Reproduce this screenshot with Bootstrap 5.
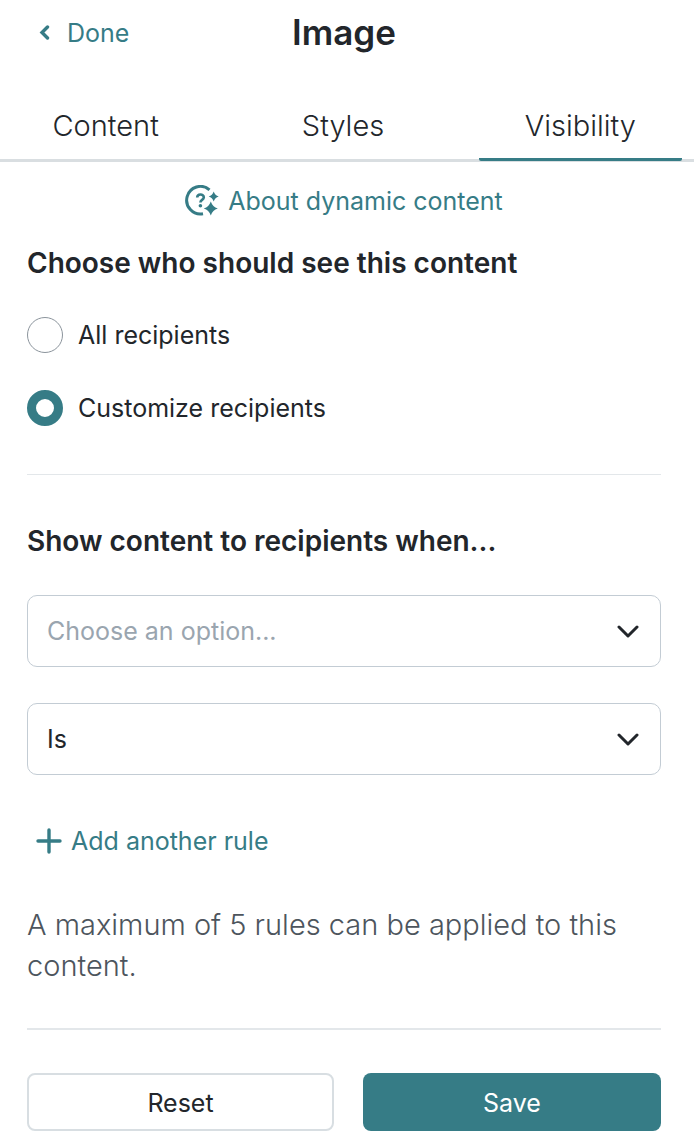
<!DOCTYPE html>
<html lang="en">
<head>
<meta charset="utf-8">
<meta name="viewport" content="width=device-width, initial-scale=1">
<title>Image</title>
<link href="https://cdn.jsdelivr.net/npm/bootstrap@5.3.0/dist/css/bootstrap.min.css" rel="stylesheet">
<style>
  :root { --teal: #367c86; --ink: #22262b; --edge: #c3ccd4; }
  body { font-family: Inter, "Liberation Sans", sans-serif; font-size: 25px; font-weight: 400; line-height: 36px; color: var(--ink); background: #fff; }
  .teal-link { color: var(--teal); text-decoration: none; }
  .teal-link:hover { color: #24616a; }
  .panel-body { padding: 0 33px 0 27px; }
  .panel-head { display: grid; grid-template-columns: 1fr auto 1fr; height: 66px; padding: 0 33px 0 27px; }
  .panel-head h1 { font-size: 35px; line-height: 64px; padding-bottom: 2px; font-weight: 600; }
  .back-link { padding-left: 12px; gap: 16px; }
  .panel-tabs { gap: 34px; margin-top: 26px; padding: 0 12px 0 4px; height: 70px; box-shadow: inset 0 -3px #d9dee1; }
  .panel-tabs .nav-link { height: 69px; padding: 0; line-height: 68px; font-size: 29px; font-weight: 300; color: var(--ink); border-bottom: 3px solid transparent; border-radius: 2px; }
  .panel-tabs .nav-link.active { border-color: var(--teal); }
  .about-link { height: 40px; margin-top: 19px; gap: 9px; }
  .section-title { font-size: 28px; line-height: 36px; font-weight: 600; }
  .choices { display: grid; gap: 37px; padding-top: 36px; }
  .choice { gap: 15px; }
  .choice .form-check-input { width: 36px; height: 36px; margin: 0; float: none; flex: none; border: 1px solid #8b949c; }
  .choice .form-check-input:checked { background: #fff; border: 9px solid var(--teal); }
  .form-check-input:focus, .form-select:focus { box-shadow: 0 0 0 3px #367c8640; }
  .rule-fields { display: grid; gap: 36px; }
  .rule-select { height: 72px; padding: 0 60px 0 19px; font-size: 25px; line-height: 36px; color: var(--ink); border: 1px solid var(--edge); border-radius: 10px; background-position: right 21px center; background-size: 22px 13px;
    background-image: url("data:image/svg+xml,%3Csvg xmlns='http://www.w3.org/2000/svg' viewBox='0 0 22 13'%3E%3Cpath d='M2 2l9 9L20 2' fill='none' stroke='%2322262b' stroke-width='3' stroke-linecap='round' stroke-linejoin='round'/%3E%3C/svg%3E"); }
  .rule-select.is-empty { color: #9aa5af; }
  .add-link { padding-left: 9px; gap: 9px; }
  .rule-line { border: 0; border-top: 1px solid #e3e7ea; opacity: 1; margin: 0; }
  .rule-line.thick { border-top-width: 2px; }
  .hint { font-size: 29px; font-weight: 300; line-height: 41px; color: #4d555d; margin: 45px 0 42px; }
  .actions { display: grid; grid-template-columns: 307fr 298fr; gap: 29px; padding: 43px 0 15px; }
  .actions .btn { height: 58px; padding: 2px 0 0; font-size: 25px; line-height: 36px; border-radius: 8px; }
  .actions .btn-reset { border: 2px solid #d8dee2; color: var(--ink); background: #fff; }
  .actions .btn-save { background: var(--teal); color: #fff; border: 0; }
  .actions .btn-save:hover { background: #24616a; }
</style>
</head>
<body>
<header>
  <div class="panel-head align-items-center">
    <a href="#" class="teal-link back-link d-flex align-items-center">
      <svg width="12" height="16" viewBox="0 0 12 16" fill="none" stroke="currentColor" stroke-width="3.400" stroke-linecap="round" aria-hidden="true"><path d="M8.500 2 3 7.500 8.500 13"/></svg>
      <span>Done</span>
    </a>
    <h1 class="m-0">Image</h1>
  </div>
  <nav class="panel-tabs nav nav-fill nav-justified flex-nowrap">
    <a class="nav-link" href="#">Content</a>
    <a class="nav-link" href="#">Styles</a>
    <a class="nav-link active" href="#" aria-current="page">Visibility</a>
  </nav>
</header>
<main class="panel-body">
  <a href="#" class="teal-link about-link d-flex align-items-center justify-content-center">
    <svg width="34" height="32" viewBox="0 0 34 32" fill="none" stroke="currentColor" aria-hidden="true">
      <path d="M24.500 4.800A13.800 13.800 0 1 0 18 28.800" stroke-width="3"/>
      <path d="M12.200 12.600c0-4 6.600-4 6.600-.3 0 2.700-3.400 2.500-3.400 5.200" stroke-width="2.600"/>
      <circle cx="15.400" cy="20.700" r="1.800" fill="currentColor" stroke="none"/>
      <path d="M28.700 6.600q1.300 4 5 5-3.700 1-5 5-1.300-4-5-5 3.700-1 5-5ZM25.800 16.500q1.800 5.400 7 7-5.200 1.600-7 7-1.800-5.400-7-7 5.200-1.600 7-7Z" fill="currentColor" stroke="none"/>
    </svg>
    <span>About dynamic content</span>
  </a>
  <form>
    <fieldset>
      <legend class="section-title mb-0 mt-4">Choose who should see this content</legend>
      <div class="choices">
        <div class="choice d-flex align-items-center">
          <input class="form-check-input" type="radio" name="audience" id="all">
          <label for="all">All recipients</label>
        </div>
        <div class="choice d-flex align-items-center">
          <input class="form-check-input" type="radio" name="audience" id="custom" checked>
          <label for="custom">Customize recipients</label>
        </div>
      </div>
    </fieldset>
    <hr class="rule-line mt-5">
    <div class="rule-fields mt-5">
      <h2 class="section-title m-0">Show content to recipients when...</h2>
      <select class="form-select rule-select is-empty" aria-label="Rule field"><option>Choose an option...</option></select>
      <select class="form-select rule-select" aria-label="Rule condition"><option>Is</option></select>
    </div>
    <div class="d-flex mt-5">
      <a href="#" class="teal-link add-link d-flex align-items-center">
        <svg width="26" height="26" viewBox="0 0 26 26" fill="none" stroke="currentColor" stroke-width="3.400" stroke-linecap="round" aria-hidden="true"><path d="M13 2v22M2 13h22"/></svg>
        <span>Add another rule</span>
      </a>
    </div>
    <p class="hint">A maximum of 5 rules can be applied to this content.</p>
    <hr class="rule-line thick">
    <div class="actions">
      <button type="reset" class="btn btn-reset">Reset</button>
      <button type="button" class="btn btn-save">Save</button>
    </div>
  </form>
</main>
<script src="https://cdn.jsdelivr.net/npm/bootstrap@5.3.0/dist/js/bootstrap.bundle.min.js"></script>
</body>
</html>
